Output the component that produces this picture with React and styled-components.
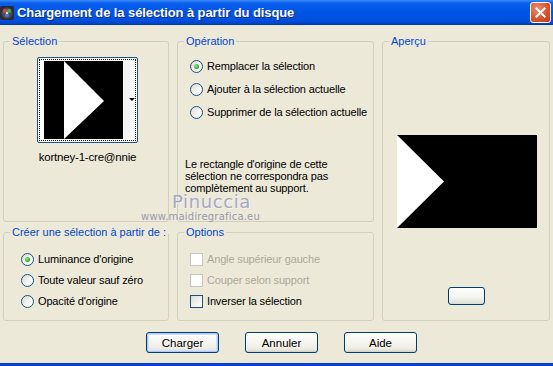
import React from 'react';
import styled, {createGlobalStyle} from 'styled-components';

const GlobalStyle = createGlobalStyle`
  html, body {
    margin: 0;
    padding: 0;
    background: #ECE9D8;
  }
  body {
    font-family: "Liberation Sans", Arial, sans-serif;
    font-size: 11px;
    color: #000;
  }
`;

const Window = styled.div`
  position: relative;
  width: 553px;
  height: 366px;
  box-sizing: border-box;
  background: #ECE9D8;
  border-bottom: 3px solid #0A3FD6;
  display: flex;
  flex-direction: column;
  overflow: hidden;
`;

const TitleBar = styled.div`
  height: 25px;
  flex: none;
  display: flex;
  align-items: center;
  background: linear-gradient(180deg, #3C8CF8 0%, #0A5FEE 12%, #0055E6 45%, #0052E0 75%, #0047CF 92%, #0038B0 100%);
`;

const TitleIcon = styled.svg`
  width: 14px;
  height: 14px;
  flex: none;
`;

const TitleText = styled.div`
  margin-left: 3px;
  flex: 1;
  color: #fff;
  font-family: "Liberation Sans", Arial, sans-serif;
  font-weight: bold;
  font-size: 13px;
  letter-spacing: -0.1px;
  text-shadow: 1px 1px 0 #0A2A8C;
`;

const CloseButton = styled.div`
  width: 21px;
  height: 21px;
  margin-right: 2px;
  box-sizing: border-box;
  border: 1px solid #fff;
  border-radius: 3px;
  background: radial-gradient(circle at 35% 30%, #F08A70 0%, #D9552F 55%, #B83B1B 100%);
  display: flex;
  align-items: center;
  justify-content: center;
`;

const Body = styled.div`
  flex: 1;
  padding: 10px 3px 0 3px;
  display: flex;
  flex-direction: column;
`;

const Panels = styled.div`
  display: grid;
  grid-template-columns: 166px 197px 168px;
  grid-template-rows: 187px 95px;
  column-gap: 8px;
  row-gap: 4px;
`;

const Group = styled.fieldset`
  margin: 0;
  padding: 0;
  min-width: 0;
  border: 1px solid #D0D0BF;
  border-radius: 3px;
  display: flex;
  flex-direction: column;
  white-space: nowrap;
  ${p => p.$side && 'grid-column: 3; grid-row: 1 / span 2;'}
`;

const Legend = styled.legend`
  margin-left: 6px;
  padding: 0 2px;
  line-height: 12px;
  color: #0046D5;
`;

const ThumbWrap = styled.div`
  display: flex;
  flex-direction: column;
  align-items: center;
  padding-top: 10px;
  padding-left: 3px;
`;

const Thumb = styled.div`
  position: relative;
  width: 101px;
  height: 86px;
  box-sizing: border-box;
  border: 1px solid #1C5180;
  border-radius: 2px;
  background: #fff;
  padding: 1px;
`;

const ThumbInner = styled.div`
  width: 100%;
  height: 100%;
  box-sizing: border-box;
  border: 1px dotted #000;
  padding: 1px 5px 1px 4px;
  display: flex;
`;

const ThumbImage = styled.svg`
  width: 79px;
  height: 78px;
  display: block;
`;

const ThumbStrip = styled.div`
  flex: 1;
  background: #F4F4F4;
`;

const DropArrow = styled.div`
  position: absolute;
  right: 2px;
  top: 40px;
  width: 0;
  height: 0;
  border-left: 3px solid transparent;
  border-right: 3px solid transparent;
  border-top: 3px solid #000;
`;

const ThumbName = styled.div`
  margin-top: 8px;
  font-size: 11.5px;
  letter-spacing: -0.2px;
`;

const RadioList = styled.div`
  display: flex;
  flex-direction: column;
  gap: ${p => p.$gap}px;
  padding: ${p => p.$top}px 0 0 ${p => p.$left}px;
`;

const OptionRow = styled.label`
  display: flex;
  align-items: center;
  gap: 4px;
  height: 13px;
  line-height: 13px;
  letter-spacing: -0.15px;
  color: ${p => p.$disabled ? '#ACA899' : '#000'};
`;

const Radio = styled.span`
  position: relative;
  width: 13px;
  height: 13px;
  box-sizing: border-box;
  border: 1px solid #1C5180;
  border-radius: 50%;
  background: linear-gradient(135deg, #DCD9CF 0%, #F6F6F3 60%, #FFFFFF 100%);
  flex: none;

  &::after {
    content: '';
    display: ${p => p.$checked ? 'block' : 'none'};
    position: absolute;
    left: 3px;
    top: 3px;
    width: 5px;
    height: 5px;
    border-radius: 50%;
    background: radial-gradient(circle at 35% 35%, #8BEA8B 0%, #33B233 60%, #1E8E1E 100%);
  }
`;

const Checkbox = styled.span`
  width: 13px;
  height: 13px;
  box-sizing: border-box;
  border: 1px solid ${p => p.$disabled ? '#CAC8BB' : '#1C5180'};
  background: ${p => p.$disabled ? '#FFFFFF' : 'linear-gradient(135deg, #DCDCD7 0%, #F4F4F1 60%, #FFFFFF 100%)'};
  flex: none;
`;

const Note = styled.p`
  margin: 39px 0 0 7px;
  line-height: 12px;
  font-size: 11px;
  letter-spacing: -0.15px;
`;

const PreviewArea = styled.div`
  flex: 1;
  display: flex;
  flex-direction: column;
  align-items: center;
  padding-left: 1px;
`;

const PreviewImage = styled.svg`
  margin-top: 88px;
  width: 140px;
  height: 93px;
  display: block;
`;

const SmallButton = styled.div`
  margin-top: 59px;
  width: 37px;
  height: 18px;
  box-sizing: border-box;
  border: 1px solid #003C74;
  border-radius: 3px;
  background: linear-gradient(180deg, #FFFFFF 0%, #F3F3EF 60%, #DCDCD4 100%);
`;

const ButtonRow = styled.div`
  display: flex;
  gap: 26px;
  padding: 11px 0 0 143px;
`;

const Button = styled.button`
  width: 73px;
  height: 21px;
  box-sizing: border-box;
  padding: 0;
  border: 1px solid #003C74;
  border-radius: 3px;
  font-family: "Liberation Sans", Arial, sans-serif;
  font-size: 11.5px;
  color: #000;
  background: linear-gradient(180deg, #FFFFFF 0%, #F5F4EF 50%, #ECEBE4 85%, #D6D0C5 100%);
  box-shadow: ${p => p.$default ? 'inset 0 0 0 1px #AFCBF5, inset 0 0 0 2px #CEE0FA' : 'none'};
`;

const Watermark = styled.div`
  position: absolute;
  left: 141px;
  top: 194px;
  display: flex;
  flex-direction: column;
  pointer-events: none;
`;

const WatermarkName = styled.div`
  font-family: "DejaVu Sans", sans-serif;
  font-size: 18px;
  letter-spacing: 0.6px;
  color: #A7A9C2;
  text-shadow: 1px 1px 0 #F4F4F4;
  line-height: 15px;
  margin-left: 31px;
`;

const WatermarkUrl = styled.div`
  font-family: "DejaVu Sans", sans-serif;
  font-size: 10px;
  letter-spacing: 0.2px;
  color: #9A9AAE;
  line-height: 12px;
  margin-top: 2px;
`;

const Option = ({type, checked, disabled, children}) => (
  <OptionRow $disabled={disabled}>
    {type === 'radio'
      ? <Radio $checked={checked}/>
      : <Checkbox $disabled={disabled}/>}
    <span>{children}</span>
  </OptionRow>
);

const App = () => (
  <Window>
    <GlobalStyle/>
    <TitleBar>
      <TitleIcon viewBox="0 0 14 14">
        <rect x="0" y="0" width="14" height="14" rx="2" fill="#2A2A3A"/>
        <circle cx="7" cy="7" r="5.5" fill="#4A4A5A"/>
        <circle cx="5" cy="5" r="2" fill="#E04040"/>
        <circle cx="9" cy="5" r="2" fill="#40B040"/>
        <circle cx="7" cy="9" r="2" fill="#4080E0"/>
        <circle cx="7" cy="7" r="1" fill="#fff"/>
      </TitleIcon>
      <TitleText>Chargement de la sélection à partir du disque</TitleText>
      <CloseButton>
        <svg width="11" height="11" viewBox="0 0 11 11">
          <path d="M1.5 1.5 L9.5 9.5 M9.5 1.5 L1.5 9.5" stroke="#fff" strokeWidth="2" strokeLinecap="square"/>
        </svg>
      </CloseButton>
    </TitleBar>

    <Body>
      <Panels>
        <Group>
          <Legend>Sélection</Legend>
          <ThumbWrap>
            <Thumb>
              <ThumbInner>
                <ThumbImage viewBox="0 0 79 78">
                  <rect width="79" height="78" fill="#000"/>
                  <polygon points="20,0 60,40 20,78" fill="#fff"/>
                </ThumbImage>
                <ThumbStrip/>
              </ThumbInner>
              <DropArrow/>
            </Thumb>
            <ThumbName>kortney-1-cre@nnie</ThumbName>
          </ThumbWrap>
        </Group>

        <Group>
          <Legend>Opération</Legend>
          <RadioList $top={13} $left={12} $gap={10}>
            <Option type="radio" checked>Remplacer la sélection</Option>
            <Option type="radio">Ajouter à la sélection actuelle</Option>
            <Option type="radio">Supprimer de la sélection actuelle</Option>
          </RadioList>
          <Note>
            Le rectangle d'origine de cette<br/>
            sélection ne correspondra pas<br/>
            complètement au support.
          </Note>
        </Group>

        <Group $side>
          <Legend>Aperçu</Legend>
          <PreviewArea>
            <PreviewImage viewBox="0 0 140 93">
              <rect width="140" height="93" fill="#000"/>
              <polygon points="0,0 47,46.5 0,93" fill="#fff"/>
            </PreviewImage>
            <SmallButton/>
          </PreviewArea>
        </Group>

        <Group>
          <Legend>Créer une sélection à partir de :</Legend>
          <RadioList $top={15} $left={17} $gap={8}>
            <Option type="radio" checked>Luminance d'origine</Option>
            <Option type="radio">Toute valeur sauf zéro</Option>
            <Option type="radio">Opacité d'origine</Option>
          </RadioList>
        </Group>

        <Group>
          <Legend>Options</Legend>
          <RadioList $top={15} $left={12} $gap={8}>
            <Option type="checkbox" disabled>Angle supérieur gauche</Option>
            <Option type="checkbox" disabled>Couper selon support</Option>
            <Option type="checkbox">Inverser la sélection</Option>
          </RadioList>
        </Group>
      </Panels>

      <ButtonRow>
        <Button $default>Charger</Button>
        <Button>Annuler</Button>
        <Button>Aide</Button>
      </ButtonRow>
    </Body>

    <Watermark>
      <WatermarkName>Pinuccia</WatermarkName>
      <WatermarkUrl>www.maidiregrafica.eu</WatermarkUrl>
    </Watermark>
  </Window>
);

export default App;
